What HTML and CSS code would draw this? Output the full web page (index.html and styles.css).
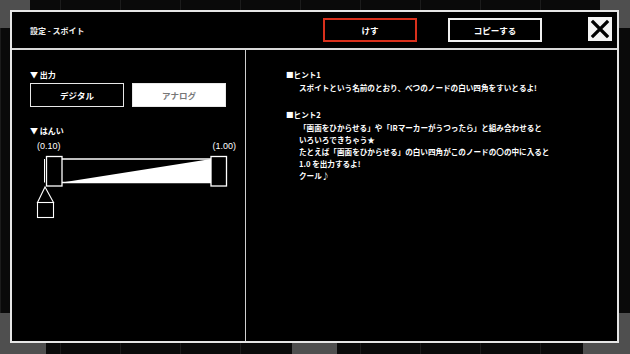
FILE: index.html
```html
<!DOCTYPE html>
<html lang="ja">
<head>
<meta charset="utf-8">
<link rel="stylesheet" href="styles.css">
</head>
<body>
<div class="tile tile-tl"></div>
<div class="tile tile-tr"></div>
<div class="tile tile-bl"></div>
<div class="tile tile-bm"></div>
<div class="tile tile-br"></div>
<div class="modal">
  <div class="header">
    <div class="title">設定 - スポイト</div>
    <div class="btn btn-red">けす</div>
    <div class="btn btn-copy">コピーする</div>
    <div class="close">
      <svg width="24" height="24" viewBox="0 0 24 24"><path d="M5 5 L19 19 M19 5 L5 19" stroke="#000" stroke-width="3.2" stroke-linecap="square"/></svg>
    </div>
  </div>
  <div class="body">
    <div class="left">
      <div class="label">▼ 出力</div>
      <div class="toggle">
        <div class="opt">デジタル</div>
        <div class="opt opt-on">アナログ</div>
      </div>
      <div class="label label-range">▼ はんい</div>
      <div class="vals"><span>(0.10)</span><span>(1.00)</span></div>
      <svg class="slider" width="200" height="66" viewBox="0 0 200 66">
        <line x1="14.5" y1="5" x2="14.5" y2="28.5" stroke="#fff" stroke-width="1"/>
        <line x1="32" y1="5" x2="181" y2="5" stroke="#fff" stroke-width="1.3"/>
        <line x1="32" y1="28.5" x2="181" y2="28.5" stroke="#fff" stroke-width="1.3"/>
        <polygon points="32,28.5 181,5 181,28.5" fill="#fff"/>
        <rect x="16.5" y="2.5" width="15.5" height="29.5" fill="#000" stroke="#fff" stroke-width="1.3"/>
        <rect x="181" y="2.5" width="15.5" height="29.5" fill="#000" stroke="#fff" stroke-width="1.3"/>
        <polygon points="15,33 7.5,48.5 23.5,48.5" fill="none" stroke="#fff" stroke-width="1.1"/>
        <rect x="7.5" y="48.5" width="16" height="15" fill="#000" stroke="#fff" stroke-width="1.1"/>
      </svg>
    </div>
    <div class="right">
      <div class="hint-title">■ヒント1</div>
      <div class="hint-text">スポイトという名前のとおり、べつのノードの白い四角をすいとるよ!</div>
      <div class="hint-title hint-2">■ヒント2</div>
      <div class="hint-text">「画面をひからせる」や「IRマーカーがうつったら」と組み合わせると<br>いろいろできちゃう★<br>たとえば「画面をひからせる」の白い四角がこのノードの〇の中に入ると<br>1.0 を出力するよ!<br>クール♪</div>
    </div>
  </div>
</div>
</body>
</html>
```

FILE: styles.css
```css
html, body {
  margin: 0;
  padding: 0;
}
body {
  width: 630px;
  height: 354px;
  background: #0a0a0a;
  background-image: linear-gradient(90deg, rgba(40,40,40,0.6) 1px, transparent 1px);
  background-size: 60px 100%;
  position: relative;
  overflow: hidden;
  font-family: "Noto Sans CJK JP", "Noto Sans", sans-serif;
  color: #fff;
}
.tile {
  position: absolute;
  background: #4f4f4f;
}
.tile-tl { left: 0; top: 0; width: 30px; height: 28px; }
.tile-tr { left: 600px; top: 0; width: 30px; height: 28px; }
.tile-bl { left: 0; top: 313px; width: 46px; height: 41px; }
.tile-bm { left: 292px; top: 330px; width: 45px; height: 24px; }
.tile-br { left: 583px; top: 313px; width: 47px; height: 41px; }
.modal {
  position: absolute;
  left: 10px;
  top: 10px;
  width: 605px;
  height: 329px;
  border: 2px solid #e6e6e6;
  background: #000;
  display: flex;
  flex-direction: column;
}
.header {
  height: 36px;
  border-bottom: 2px solid #d8d8d8;
  display: flex;
  align-items: center;
  padding: 0 5px 0 18px;
}
.title {
  flex: 1;
  font-size: 8px;
  font-weight: bold;
  color: #eee;
  margin-top: 1px;
}
.btn {
  width: 90px;
  height: 20px;
  box-sizing: content-box;
  display: flex;
  align-items: center;
  justify-content: center;
  font-size: 8.5px;
  font-weight: bold;
}
.btn-red {
  border: 2px solid #d9301c;
}
.btn-copy {
  border: 2px solid #f0f0f0;
  margin-left: 31px;
  margin-right: 46px;
}
.close {
  width: 24px;
  height: 24px;
  background: #f4f4f4;
  margin-top: -2px;
}
.close svg { display: block; }
.body {
  flex: 1;
  display: flex;
}
.left {
  width: 215px;
  padding: 20px 0 0 18px;
  border-right: 1.5px solid #cfcfcf;
}
.label {
  font-size: 8px;
  font-weight: bold;
  line-height: 10px;
}
.toggle {
  display: flex;
  margin-top: 3px;
  gap: 8px;
}
.opt {
  width: 92px;
  height: 22px;
  border: 1.5px solid #e8e8e8;
  display: flex;
  align-items: center;
  justify-content: center;
  font-size: 8.5px;
  font-weight: bold;
}
.opt-on {
  background: #fff;
  color: #777;
}
.label-range {
  margin-top: 19px;
}
.vals {
  display: flex;
  justify-content: space-between;
  width: 199px;
  margin-left: 7px;
  margin-top: 5px;
  font-size: 9px;
  font-family: "Liberation Sans", sans-serif;
  line-height: 10px;
}
.slider {
  display: block;
  margin-top: 3px;
}
.right {
  flex: 1;
  padding: 20px 0 0 40px;
  font-size: 7.6px;
  font-weight: bold;
}
.hint-title {
  line-height: 10px;
}
.hint-2 {
  margin-top: 16px;
}
.hint-text {
  padding-left: 13px;
  line-height: 12px;
  margin-top: 2px;
}
```
